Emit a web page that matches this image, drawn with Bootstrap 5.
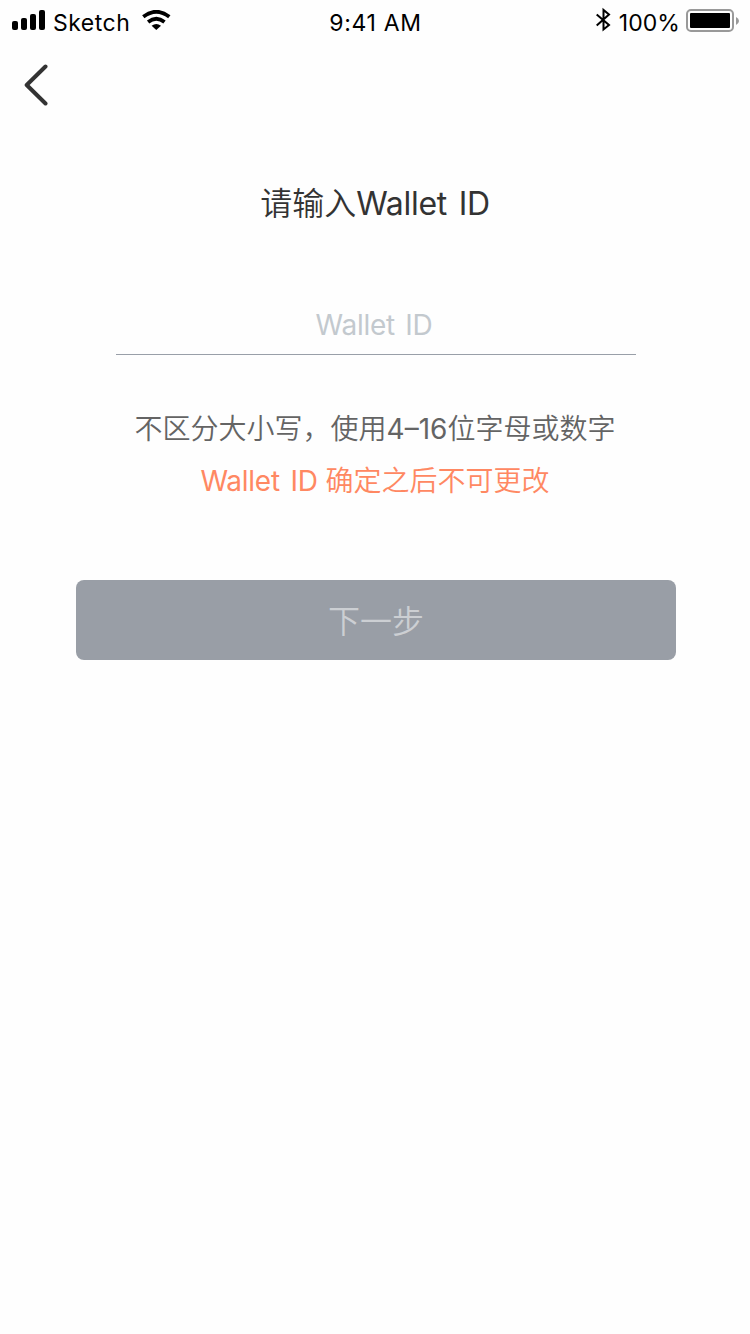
<!DOCTYPE html>
<html lang="zh-CN">
<head>
<meta charset="utf-8">
<meta name="viewport" content="width=device-width, initial-scale=1">
<title>Wallet ID</title>
<link href="https://cdn.jsdelivr.net/npm/bootstrap@5.3.0/dist/css/bootstrap.min.css" rel="stylesheet">
<style>
body{background:#fefefe;color:#333;font-family:Inter,"Noto Sans CJK SC",sans-serif;min-height:1334px}
.status{height:40px;padding:0 11px 0 12px;color:#000;font-size:23px;line-height:46px}
.status svg,.back svg{display:block;flex:none}
.side{width:250px}
.carrier{margin-left:7px;letter-spacing:.5px}
.clock{letter-spacing:.65px}
.wifi{margin:10px 0 0 12px}
.bt{margin:7px 8px 0 0}
.pct{letter-spacing:.05px}
.battery{margin:9px 0 0 6px}
.back{height:90px;padding:24px 0 0 23px}
.title{font-size:32px;line-height:48px;margin:50px 0 0;font-weight:350}
.latin{font-weight:400;letter-spacing:-.3px;word-spacing:3px}
.field{width:520px;height:56px;margin:71px 0 0 116px;padding:3px 4px 6px 0;border:0;border-bottom:1px solid #999fa8;border-radius:0;background:transparent;font-size:28px;font-weight:400;line-height:40px;text-align:center;letter-spacing:-.25px;word-spacing:2.5px}
.field:focus{background:transparent;box-shadow:none}
.field::placeholder{color:#c3c9ce;opacity:1}
.hint{font-size:28px;font-weight:350;line-height:52px;margin:48px 0 0;color:#646464}
.hint .latin{letter-spacing:-.25px}
.warn{color:#ff8862}
.next,.next:disabled{width:600px;height:80px;margin:73px 0 0 76px;border:0;border-radius:8px;background:#999ea6;color:#cccfd3;opacity:1;font-size:32px;font-weight:350;line-height:48px;padding:4px 0 0}
</style>
</head>
<body>
<header class="status d-flex justify-content-between align-items-start">
  <div class="side d-flex">
    <svg width="34" height="20" viewBox="0 0 34 20" style="margin-top:10px"><rect y="11" width="6" height="9" rx="2"/><rect x="9" y="8" width="6" height="12" rx="2"/><rect x="18" y="4" width="6" height="16" rx="2"/><rect x="27" width="6" height="20" rx="2"/></svg>
    <span class="carrier">Sketch</span>
    <svg class="wifi" width="29" height="20" viewBox="0 0 29 20"><g fill="none" stroke="#000" stroke-width="3.8"><path d="M1.3 6.7Q14.3-3.2 27.3 6.7M6.1 11.9Q14.3 5.6 22.5 11.9"/></g><path d="M9.6 15.7Q14.3 12.3 19 15.7L14.3 20Z"/></svg>
  </div>
  <time class="clock">9:41 AM</time>
  <div class="side d-flex justify-content-end">
    <svg class="bt" width="16" height="26" viewBox="0 0 16 26" fill="none" stroke="#000" stroke-width="2"><path d="M1.7 7.5 14 18 8.5 22.5V3L14 7.6 1.7 18.5"/></svg>
    <span class="pct">100%</span>
    <svg class="battery" width="53" height="23" viewBox="0 0 53 23"><rect x="1" y="1" width="46" height="21" rx="4" fill="none" stroke="#999" stroke-width="2"/><rect x="4" y="4" width="40" height="15" rx="1"/><path d="M50 8Q53 9.5 53 12T50 16Z" fill="#999"/></svg>
  </div>
</header>
<nav class="back"><svg width="26" height="42" viewBox="0 0 26 42" fill="none" stroke="#333" stroke-width="4" stroke-linecap="round" stroke-linejoin="round"><path d="M22.5 2.5 3.7 21 22.5 39.5"/></svg></nav>
<main>
  <h1 class="title text-center">请输入<span class="latin">Wallet ID</span></h1>
  <input class="form-control field" placeholder="Wallet ID" aria-label="Wallet ID">
  <p class="hint text-center">不区分大小写，使用<span class="fw-normal">4–16</span>位字母或数字<br><span class="warn"><span class="latin">Wallet ID</span> 确定之后不可更改</span></p>
  <button class="btn next" type="button" disabled>下一步</button>
</main>
</body>
</html>
